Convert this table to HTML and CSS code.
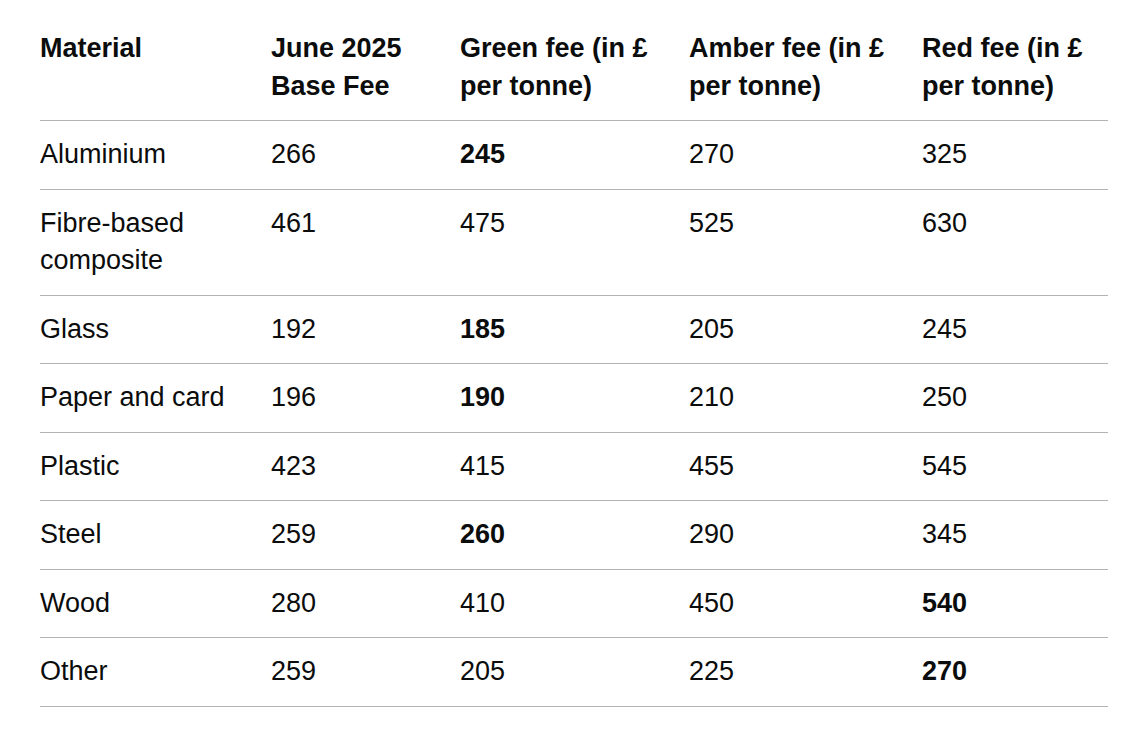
FILE: index.html
```html
<!DOCTYPE html>
<html lang="en">
<head>
<meta charset="utf-8">
<title>Fees</title>
<link rel="stylesheet" href="styles.css">
</head>
<body>
<main class="page">
<table class="fees">
<colgroup>
<col class="c1"><col class="c2"><col class="c3"><col class="c4"><col class="c5">
</colgroup>
<thead>
<tr><th>Material</th><th>June 2025 Base Fee</th><th>Green fee (in £ per tonne)</th><th>Amber fee (in £ per tonne)</th><th>Red fee (in £ per tonne)</th></tr>
</thead>
<tbody>
<tr><td>Aluminium</td><td>266</td><td><strong>245</strong></td><td>270</td><td>325</td></tr>
<tr><td>Fibre-based composite</td><td>461</td><td>475</td><td>525</td><td>630</td></tr>
<tr><td>Glass</td><td>192</td><td><strong>185</strong></td><td>205</td><td>245</td></tr>
<tr><td>Paper and card</td><td>196</td><td><strong>190</strong></td><td>210</td><td>250</td></tr>
<tr><td>Plastic</td><td>423</td><td>415</td><td>455</td><td>545</td></tr>
<tr><td>Steel</td><td>259</td><td><strong>260</strong></td><td>290</td><td>345</td></tr>
<tr><td>Wood</td><td>280</td><td>410</td><td>450</td><td><strong>540</strong></td></tr>
<tr><td>Other</td><td>259</td><td>205</td><td>225</td><td><strong>270</strong></td></tr>
</tbody>
</table>
</main>
</body>
</html>
```
FILE: styles.css
```css
html, body {
  margin: 0;
  padding: 0;
  background: #ffffff;
}
.page {
  padding: 14px 39px 0 40px;
  font-family: "Liberation Sans", Arial, sans-serif;
  color: #0b0c0c;
}
.fees {
  width: 1068px;
  table-layout: fixed;
  border-collapse: collapse;
  border-spacing: 0;
  font-size: 27px;
  line-height: 37.5px;
}
.c1 { width: 231px; }
.c2 { width: 189px; }
.c3 { width: 229px; }
.c4 { width: 233px; }
.c5 { width: 186px; }
.fees th,
.fees td {
  text-align: left;
  vertical-align: top;
  padding: 15px 30px 15px 0;
  border-bottom: 1px solid #b1b4b6;
}
.fees th {
  font-weight: 700;
  padding-top: 16px;
}
.fees th:last-child,
.fees td:last-child {
  padding-right: 0;
}
.fees strong {
  font-weight: 700;
}
```
